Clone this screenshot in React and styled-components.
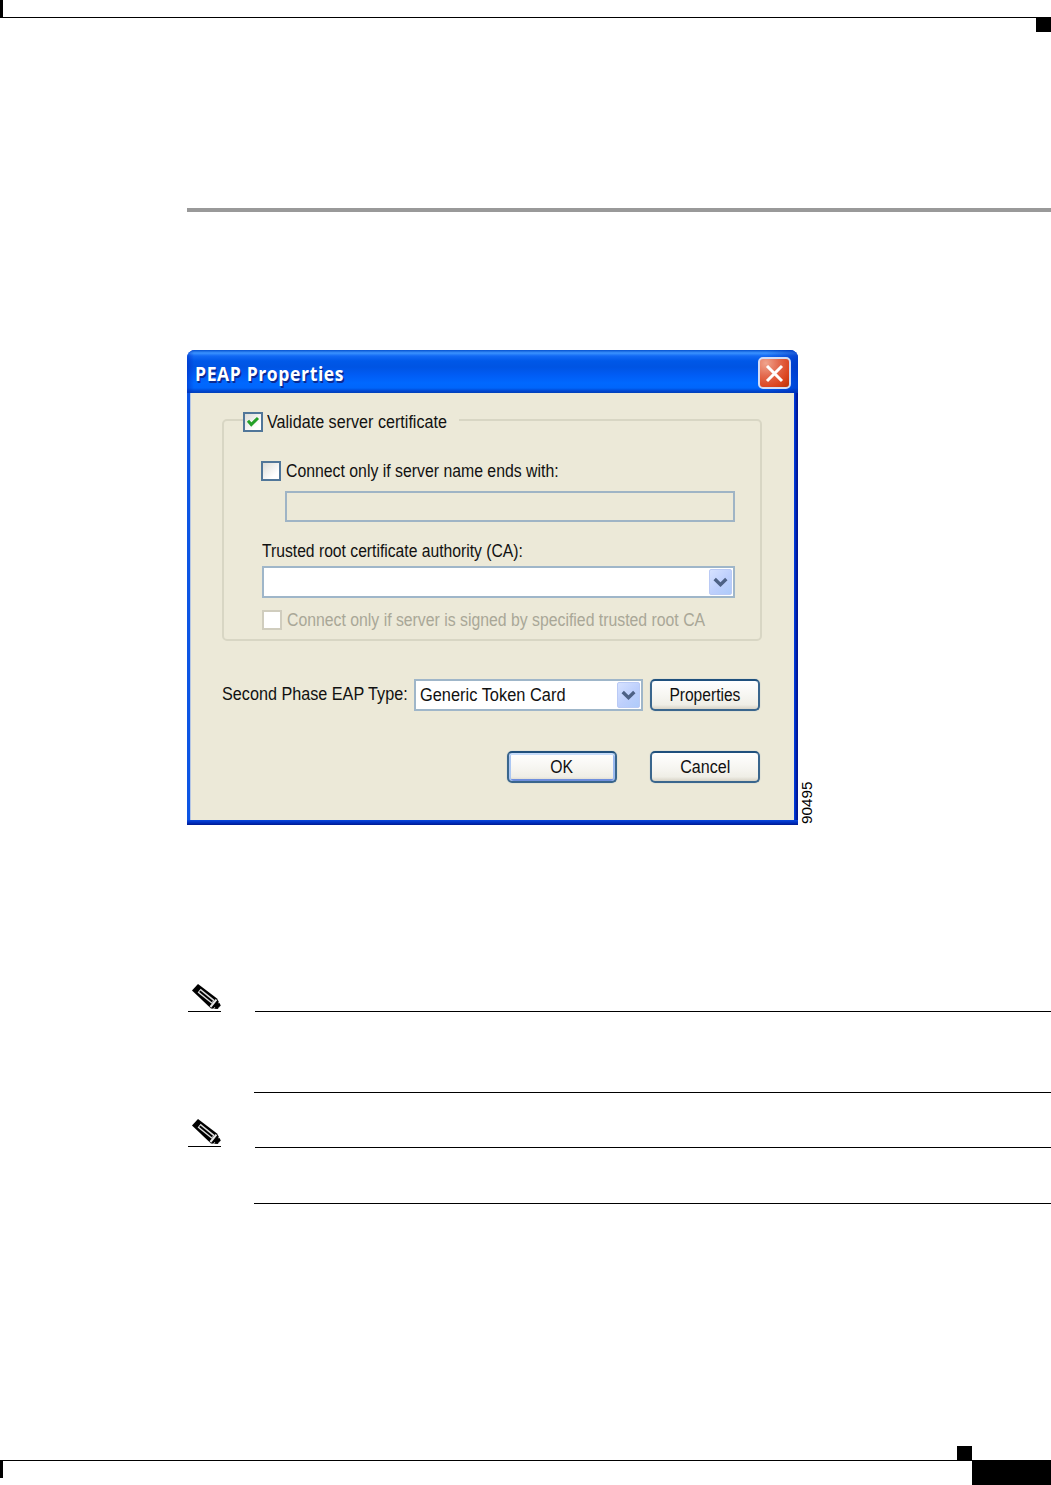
import React from "react";
import styled, { createGlobalStyle, css } from "styled-components";

const Global = createGlobalStyle`
  * { box-sizing: border-box; }
  body { margin: 0; background: #fff; }
`;

const Page = styled.div`
  width: 1051px;
  height: 1485px;
  overflow: hidden;
  display: flex;
  flex-direction: column;
  background: #fff;
  font-family: "Liberation Sans", Arial, sans-serif;
`;

/* page furniture */
const Header = styled.header`
  display: flex;
  height: 32px;
`;
const EdgeBar = styled.div`
  width: 3px;
  height: 18px;
  background: #000;
`;
const HeaderRule = styled.div`
  flex: 1;
  height: 18px;
  border-bottom: 1px solid #000;
`;
const HeaderBlock = styled.div`
  width: 15px;
  height: 15px;
  margin-top: 17px;
  background: #000;
`;
const SectionRule = styled.div`
  height: 4px;
  margin: 176px 0 138px 187px;
  background: #999;
`;
const Footer = styled.footer`
  display: flex;
  height: 39px;
  margin-top: auto;
`;
const FooterEdge = styled(EdgeBar)`
  margin-top: 14px;
`;
const FooterRule = styled.div`
  flex: 1;
  margin-top: 14px;
  border-top: 1px solid #000;
`;
const FooterSquare = styled.div`
  width: 15px;
  height: 15px;
  background: #000;
`;
const FooterBlock = styled.div`
  width: 79px;
  height: 25px;
  margin-top: 14px;
  background: #000;
`;

/* dialog */
const Figure = styled.div`
  display: flex;
  align-items: flex-end;
  height: 475px;
  padding-left: 187px;
`;
const Dialog = styled.div`
  width: 611px;
  height: 475px;
  display: flex;
  flex-direction: column;
  border-radius: 8px 8px 0 0;
  overflow: hidden;
  background:
    linear-gradient(#0a48dc, #0030c0 50%, #001a90) bottom / 100% 5px no-repeat,
    linear-gradient(90deg, #0c55e4 0 3px, #0038d8 3px calc(100% - 3px), #0020a8 calc(100% - 2px), #001590);
`;
const TitleBar = styled.div`
  height: 43px;
  flex: none;
  display: flex;
  align-items: center;
  justify-content: space-between;
  padding: 3px 7px 0 8px;
  background:
    linear-gradient(90deg, rgba(0, 40, 190, 0.5), transparent 7px, transparent calc(100% - 32px), rgba(0, 40, 180, 0.55)),
    linear-gradient(#0450cf 0, #3b93ff 3px, #1269f4 6px, #0058e8 11px, #0054e3 17px, #005cf5 25px, #0068ff 33px, #0066fb 38px, #0046d0 41px, #0140b8 43px);
`;
const Title = styled.h1`
  margin: 2px 0 0;
  color: #fff;
  font: 700 20px/24px "Open Sans", "Noto Sans", sans-serif;
  letter-spacing: 0.7px;
  white-space: nowrap;
  text-shadow: 1.5px 1.5px 0 #0a2a92;
  transform: scaleX(0.878);
  transform-origin: left;
`;
const CloseButton = styled.button`
  width: 33px;
  height: 32px;
  padding: 0;
  display: grid;
  place-items: center;
  border: 2px solid #d3dcf6;
  border-radius: 5px;
  background: radial-gradient(circle at 20% 15%, #f0a48d 0, #e36b50 38%, #dc4520 72%, #b93208 100%);
`;
const Client = styled.div`
  flex: 1;
  margin: 0 4px 5px 3px;
  padding: 26px 33px 0 31px;
  display: flex;
  flex-direction: column;
  background: #ece9d8;
  border-left: 1px solid #b5c6e4;
`;
const Label = styled.span`
  display: inline-block;
  flex: none;
  font-size: 17.5px;
  line-height: 20px;
  white-space: nowrap;
  color: ${(p) => (p.$muted ? "#a9a797" : "#111")};
  transform: scaleX(${(p) => p.$stretch});
  transform-origin: ${(p) => (p.$center ? "center" : "left")};
`;
const Group = styled.section`
  width: 540px;
  height: 222px;
  flex: none;
  display: flex;
  flex-direction: column;
  align-items: flex-start;
  padding-left: 38px;
  border: 2px solid #d8d6c4;
  border-radius: 5px;
`;
const CheckRow = styled.label`
  display: flex;
  align-items: center;
  gap: 5px;
  height: 20px;
`;
const LegendRow = styled(CheckRow)`
  width: 216px;
  margin: -9px 0 0 -19px;
  gap: 4px;
  background: #ece9d8;
`;
const NameCheck = styled(CheckRow)`
  margin: 29px 0 0 -1px;
`;
const SignedCheck = styled(CheckRow)`
  margin-top: 12px;
`;
const Box = styled.span`
  width: 20px;
  height: 20px;
  flex: none;
  display: grid;
  place-items: center;
  border: 2px solid #507699;
  background: linear-gradient(135deg, #dcdcd7, #fff 75%);
  ${(p) => p.$disabled && css`
    border-color: #d0cdbe;
    background: #fff;
  `}
`;
const NameField = styled.div`
  width: 450px;
  height: 31px;
  margin: 10px 0 0 23px;
  border: 2px solid #9fb4c5;
`;
const CaLabel = styled.div`
  height: 20px;
  margin-top: 19px;
`;
const Combo = styled.div`
  width: ${(p) => p.$width}px;
  height: 32px;
  flex: none;
  display: flex;
  align-items: center;
  justify-content: ${(p) => (p.$empty ? "flex-end" : "space-between")};
  padding: 0 1.5px 0 4px;
  border: 2px solid #9fb6c9;
  background: #fff;
`;
const CaCombo = styled(Combo)`
  margin-top: 5px;
`;
const Arrow = styled.span`
  width: 23px;
  height: 26px;
  flex: none;
  display: grid;
  place-items: center;
  border: 1px solid #bacaf5;
  border-radius: 2px;
  background: linear-gradient(135deg, #d6e2ff, #bdcffc 55%, #aecbfa);
`;
const FormRow = styled.div`
  display: flex;
  height: 32px;
  margin-top: 38px;
`;
const EapLabel = styled.div`
  width: 192px;
  padding-top: 5px;
`;
const Button = styled.button`
  width: 110px;
  height: 32px;
  padding: 0;
  flex: none;
  font-family: inherit;
  display: flex;
  align-items: center;
  justify-content: center;
  border: 2px solid #3a668d;
  border-top-color: #1f507d;
  border-radius: 5px;
  background: linear-gradient(#fff, #f5f4ef 60%, #efeee6 85%, #d8d3c7);
  box-shadow: 0 0 0 1px #e2e2d6;
  ${(p) => p.$primary && css`
    box-shadow: inset 0 2px 0 #c6dcfa, inset 2px 0 0 #abc7f3, inset -2px 0 0 #9bbaf0, inset 0 -2px 0 #6f8fdd, 0 0 0 1px #e2e2d6;
  `}
`;
const ButtonSlot = styled.div`
  padding-left: 7px;
`;
const Actions = styled.div`
  display: flex;
  justify-content: flex-end;
  gap: 33px;
  margin-top: 40px;
  width: 538px;
`;
const FigureNumber = styled.div`
  margin: 0 0 1px 1px;
  width: 15px;
  height: 43px;
  font-size: 15.3px;
  line-height: 15px;
  writing-mode: vertical-rl;
  transform: rotate(180deg);
  color: #000;
`;

/* notes */
const Note = styled.section`
  display: grid;
  grid-template-columns: 67px 1fr;
  padding-left: 187px;
  height: ${(p) => p.$height}px;
  margin-top: ${(p) => p.$gap}px;
`;
const PencilCell = styled.div`
  width: 33px;
  height: 29px;
  margin-left: 1px;
  border-bottom: 1px solid #000;
`;
const NoteBody = styled.div`
  margin-top: ${(p) => p.$top}px;
  border-bottom: 1px solid #000;
`;
const NoteTop = styled.div`
  height: 1px;
  margin-left: 1px;
  background: #000;
`;

const PencilDrawing = styled.svg`
  display: block;
  margin-top: 1px;
`;

const Chevron = () => (
  <svg width="15" height="11" viewBox="0 0 15 11">
    <path d="M1.7 2 7.5 7.6 13.3 2" fill="none" stroke="#4d6185" strokeWidth="3.4" />
  </svg>
);

const Pencil = () => (
  <PencilDrawing width="33" height="27" viewBox="0 0 33 27">
    <path d="M4 6.5 10 0 29 14.5 32.8 21.5 30 25 23 24.5Z" fill="#000" />
    <path d="M9.6 8.6 12.6 4.8 26.6 16 23.6 19.8Z" fill="#ddd" />
    <path d="M11.8 7.2 24.4 17.4" stroke="#000" strokeWidth="1.9" />
    <path d="M22.4 23 28.4 15.6" stroke="#e8e8e8" strokeWidth="2" />
    <path d="M25.6 25 26.8 23.2M30.2 18.8 32 18.4M29.8 24.8 32.4 22.4" stroke="#fff" strokeWidth="0.8" />
  </PencilDrawing>
);

export default function App() {
  return (
    <Page>
      <Global />
      <Header>
        <EdgeBar />
        <HeaderRule />
        <HeaderBlock />
      </Header>
      <SectionRule />

      <Figure>
        <Dialog>
          <TitleBar>
            <Title>PEAP Properties</Title>
            <CloseButton aria-label="Close">
              <svg width="21" height="21" viewBox="0 0 21 21">
                <path d="M3 3 18 18M18 3 3 18" stroke="#fff" strokeWidth="3" />
              </svg>
            </CloseButton>
          </TitleBar>
          <Client>
            <Group>
              <LegendRow>
                <Box>
                  <svg width="14" height="14" viewBox="0 0 14 14">
                    <path d="M2 5.8 5.3 9.5 12 3" fill="none" stroke="#24a128" strokeWidth="3" />
                  </svg>
                </Box>
                <Label $stretch={0.922}>Validate server certificate</Label>
              </LegendRow>
              <NameCheck>
                <Box />
                <Label $stretch={0.904}>Connect only if server name ends with:</Label>
              </NameCheck>
              <NameField />
              <CaLabel>
                <Label $stretch={0.896}>Trusted root certificate authority (CA):</Label>
              </CaLabel>
              <CaCombo $width={473} $empty>
                <Arrow><Chevron /></Arrow>
              </CaCombo>
              <SignedCheck>
                <Box $disabled />
                <Label $muted $stretch={0.903}>Connect only if server is signed by specified trusted root CA</Label>
              </SignedCheck>
            </Group>
            <FormRow>
              <EapLabel>
                <Label $stretch={0.925}>Second Phase EAP Type:</Label>
              </EapLabel>
              <Combo $width={229}>
                <Label $stretch={0.937}>Generic Token Card</Label>
                <Arrow><Chevron /></Arrow>
              </Combo>
              <ButtonSlot>
                <Button><Label $center $stretch={0.89}>Properties</Label></Button>
              </ButtonSlot>
            </FormRow>
            <Actions>
              <Button $primary><Label $center $stretch={0.9}>OK</Label></Button>
              <Button><Label $center $stretch={0.92}>Cancel</Label></Button>
            </Actions>
          </Client>
        </Dialog>
        <FigureNumber>90495</FigureNumber>
      </Figure>

      <Note $gap={158} $height={110}>
        <PencilCell><Pencil /></PencilCell>
        <NoteBody $top={28}><NoteTop /></NoteBody>
      </Note>
      <Note $gap={25} $height={86}>
        <PencilCell><Pencil /></PencilCell>
        <NoteBody $top={29}><NoteTop /></NoteBody>
      </Note>

      <Footer>
        <FooterEdge />
        <FooterRule />
        <FooterSquare />
        <FooterBlock />
      </Footer>
    </Page>
  );
}
